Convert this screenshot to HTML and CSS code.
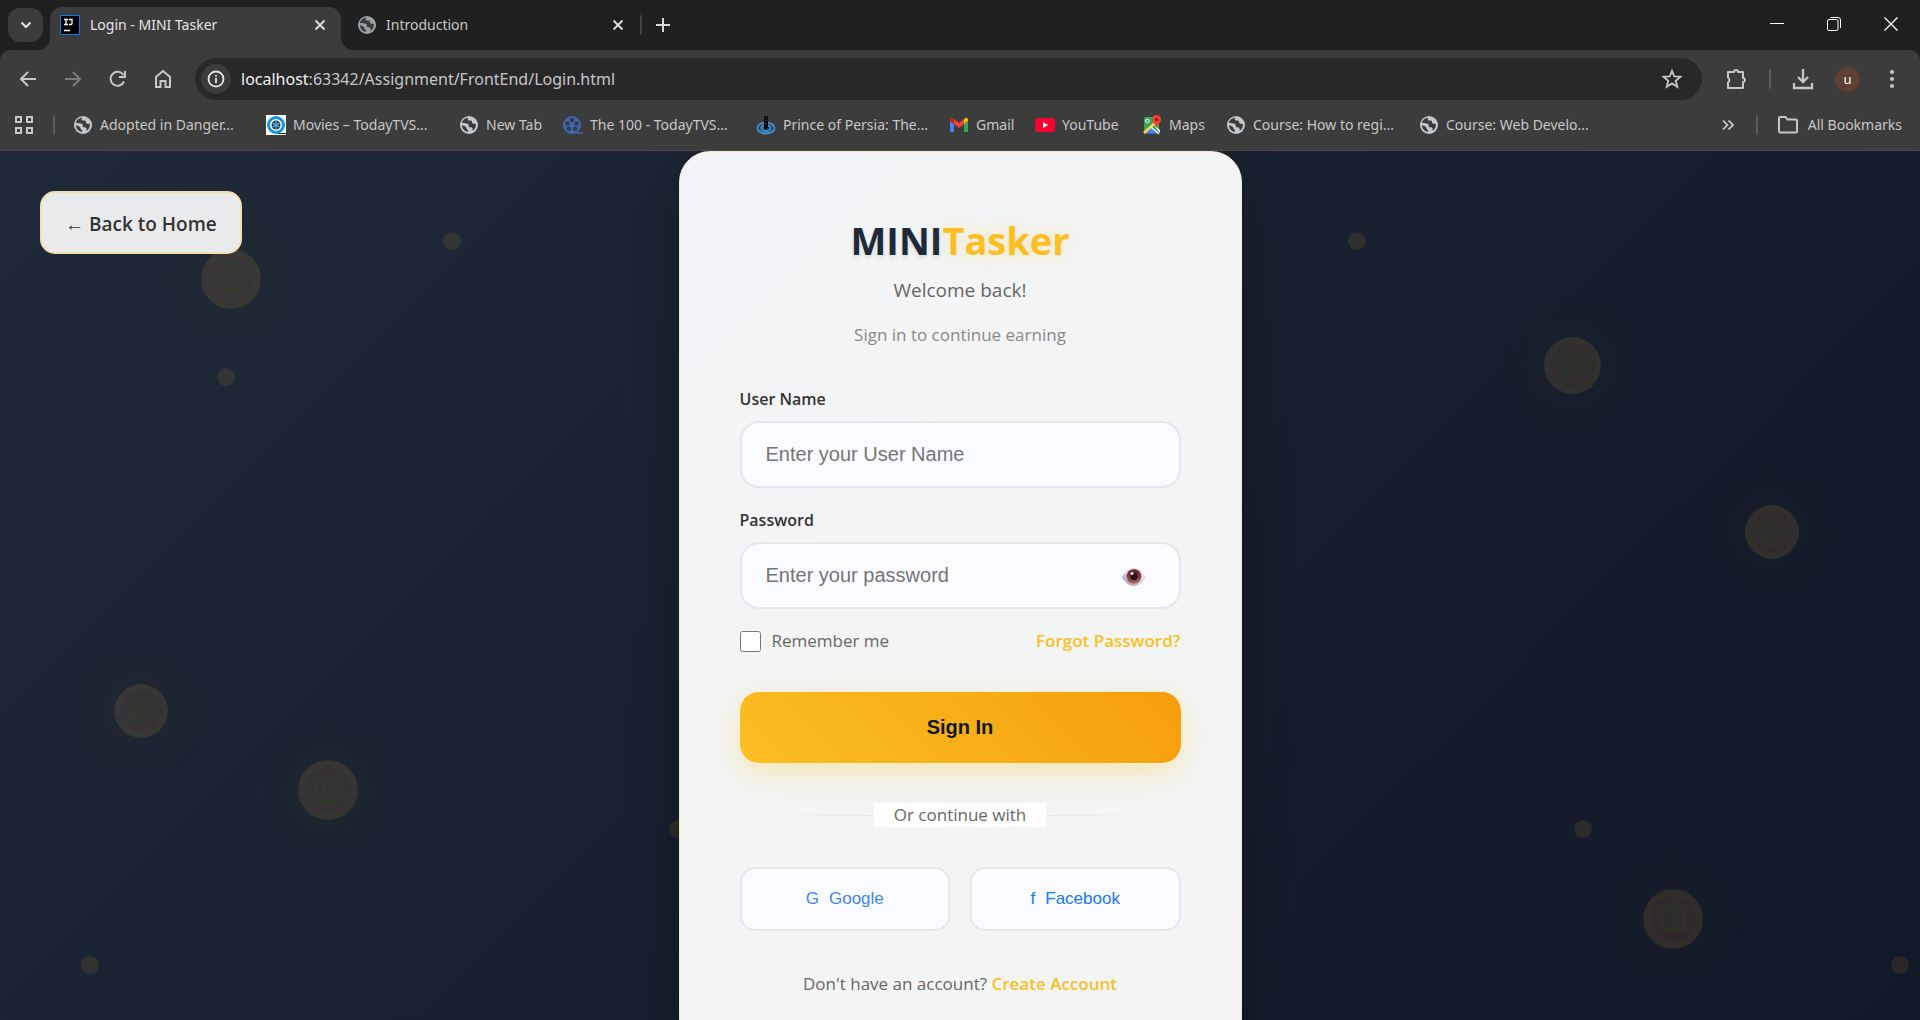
FILE: index.html
```html
<!DOCTYPE html>
<html lang="en">
<head>
<meta charset="utf-8">
<meta name="viewport" content="width=device-width, initial-scale=1">
<title>Login - MINI Tasker</title>
<link rel="stylesheet" href="styles.css">
</head>
<body>
<svg class="defs" aria-hidden="true">
  <symbol id="globe" viewBox="0 0 18 18">
    <circle cx="9" cy="9" r="9" fill="currentColor"/>
    <path class="sea" d="M8.500 1.800c-1 .8-1.300 1.700-.3 2.400 1.100.6 2.200-.2 3.200.6 1.100.9.2 2.500 1.700 2.900 1.100.3 2-.3 2.700.2.500 2.300-.8 5.400-3.100 6.900-.3-1.200.3-2.200-.6-3-.9-.7-2.200-.2-3-.9-.8-.9.100-2.200-.9-2.900-1.300-.8-4.500-.5-6.300-.9C2.300 4.300 5.100 1.800 8.500 1.800zM2 9.300c1.500.1 2.500.9 3.700 1.700 1 .7.700 1.800 1.600 2.500.6.500.9 1.200.8 2.400C4.600 15.600 2 12.700 2 9.300z"/>
  </symbol>
  <symbol id="cross" viewBox="0 0 12 12"><path d="M1.500 1.500l9 9m0-9l-9 9" fill="none" stroke="currentColor" stroke-width="1.800"/></symbol>
  <symbol id="coin" viewBox="0 0 60 60">
    <circle cx="30" cy="30" r="30" fill="#fbb934"/>
    <circle cx="30" cy="30" r="23" fill="#f5904a"/>
    <path fill="#d8c420" d="M30 11L45 20v3H15v-3zM18 24h4v16h-4zM25 24h4v16h-4zM32 24h4v16h-4zM39 24h4v16h-4zM17 39h27v4H17z"/>
  </symbol>
</svg>

<header class="browser">
  <div class="tab-strip">
    <button class="tab-search" aria-label="Search tabs"><svg width="12" height="8" viewBox="0 0 12 8"><path d="M1.500 1.500L6 6l4.500-4.500" fill="none" stroke="#e6e6e6" stroke-width="2"/></svg></button>
    <div class="tab tab-active">
      <svg width="20" height="20" viewBox="0 0 20 20"><path fill="#000" stroke="#0a7cf5" d="M.5.5h19v19H.5z"/><path d="M4 4.500h4m-2 0v5m-2 0h4M9 4.500h3v4q0 1-1.200 1H9M4 15.500h6" fill="none" stroke="#fff" stroke-width="1.300"/></svg>
      <span class="tab-title">Login - MINI Tasker</span>
      <button class="plain" aria-label="Close tab"><svg width="12" height="12"><use href="#cross"/></svg></button>
    </div>
    <div class="tab">
      <svg class="globe tab-globe" width="18" height="18"><use href="#globe"/></svg>
      <span class="tab-title">Introduction</span>
      <button class="plain" aria-label="Close tab"><svg width="12" height="12"><use href="#cross"/></svg></button>
    </div>
    <span class="separator"></span>
    <button class="plain new-tab" aria-label="New tab"><svg width="14" height="14" viewBox="0 0 14 14"><path d="M7 0v14M0 7h14" stroke="#d8d8d8" stroke-width="2"/></svg></button>
    <div class="window-controls">
      <button class="plain" aria-label="Minimize"><svg width="14" height="14" viewBox="0 0 14 14"><path d="M0 6.500h14" stroke="#fff"/></svg></button>
      <button class="plain" aria-label="Restore"><svg width="14" height="14" viewBox="0 0 14 14" fill="none" stroke="#fff"><rect x=".5" y="2.500" width="10.500" height="11" rx="1.500"/><path d="M3.500.5H11Q13.500.5 13.500 3v8"/></svg></button>
      <button class="plain" aria-label="Close"><svg width="14" height="14" viewBox="0 0 14 14"><path d="M.5.5l13 13m0-13l-13 13" stroke="#fff" stroke-width="1.300"/></svg></button>
    </div>
  </div>

  <div class="toolbar">
    <nav class="history" aria-label="Browser">
      <button class="plain" aria-label="Back"><svg width="20" height="20" viewBox="0 0 20 20"><path d="M18 10H3m7-7l-7 7 7 7" fill="none" stroke="#c7c7c7" stroke-width="2"/></svg></button>
      <button class="plain" aria-label="Forward"><svg width="20" height="20" viewBox="0 0 20 20"><path d="M2 10h15m-7-7l7 7-7 7" fill="none" stroke="#7c7c7c" stroke-width="2"/></svg></button>
      <button class="plain" aria-label="Reload"><svg width="20" height="20" viewBox="0 0 20 20"><path d="M16 12.500A7 7 0 1 1 15.500 6M17 2v6h-6" fill="none" stroke="#c7c7c7" stroke-width="2"/></svg></button>
      <button class="plain" aria-label="Home"><svg width="20" height="20" viewBox="0 0 20 20"><path d="M3 18V8l7-6 7 6v10h-4.500v-6h-5v6z" fill="none" stroke="#c7c7c7" stroke-width="2"/></svg></button>
    </nav>
    <div class="address">
      <button class="site-info" aria-label="Site information"><svg width="18" height="18" viewBox="0 0 18 18"><circle cx="9" cy="9" r="7.500" fill="none" stroke="#e3e3e3" stroke-width="1.800"/><path d="M9 8v5M9 5v1.800" stroke="#e3e3e3" stroke-width="1.800"/></svg></button>
      <span class="url"><b>localhost</b>:63342/Assignment/FrontEnd/Login.html</span>
      <button class="plain" aria-label="Bookmark this tab"><svg width="20" height="20" viewBox="0 0 20 20"><path d="M10 1.800l2.300 5.700 6.100.4-4.700 3.900 1.600 6L10 14.400l-5.300 3.400 1.600-6L1.600 7.900l6.100-.4z" fill="none" stroke="#c7c7c7" stroke-width="1.800"/></svg></button>
    </div>
    <div class="tools">
      <button class="plain" aria-label="Extensions"><svg width="22" height="22" viewBox="0 0 22 22"><path d="M2 4h6a2 2 0 0 1 4 0h5v6a2 2 0 0 1 0 4v6H2v-5.500a3 3 0 0 0 0-5z" fill="none" stroke="#c7c7c7" stroke-width="2" stroke-linejoin="round"/></svg></button>
      <span class="separator"></span>
      <button class="plain" aria-label="Downloads"><svg width="22" height="22" viewBox="0 0 22 22"><path d="M11 1v13m-5-5l5 5 5-5M2 15v5h18v-5" fill="none" stroke="#c7c7c7" stroke-width="2.300"/></svg></button>
      <button class="avatar" aria-label="Profile">u</button>
      <button class="plain" aria-label="Menu"><svg width="22" height="20" viewBox="0 0 22 20" fill="#c7c7c7"><circle cx="11" cy="3" r="2"/><circle cx="11" cy="10" r="2"/><circle cx="11" cy="17" r="2"/></svg></button>
    </div>
  </div>

  <div class="bookmarks">
    <button class="plain" aria-label="Apps"><svg width="18" height="18" viewBox="0 0 18 18" fill="none" stroke="#c7c7c7" stroke-width="2"><path d="M1 1h5v5H1zM12 1h5v5h-5zM1 12h5v5H1zM12 12h5v5h-5z"/></svg></button>
    <span class="separator"></span>
    <nav class="bookmark-list" aria-label="Bookmarks">
      <a href="#" class="wide"><svg class="globe"><use href="#globe"/></svg>Adopted in Danger...</a>
      <a href="#" class="wide"><svg viewBox="0 0 20 20"><path fill="#fff" d="M0 0h20v20H0z"/><circle cx="10" cy="10" r="7.500" fill="none" stroke="#1595e0" stroke-width="3"/><circle cx="10" cy="10" r="4.500" fill="#2b3a44"/><path d="M6.500 8l7 4M6.500 12l7-4M10 6v8" stroke="#4fb8ee" stroke-width="1.200"/><path d="M12 18.500h8" stroke="#222"/></svg>Movies – TodayTVS...</a>
      <a href="#" class="tab-link"><svg class="globe"><use href="#globe"/></svg>New Tab</a>
      <a href="#" class="wide"><svg viewBox="0 0 20 20"><circle cx="9" cy="10" r="9" fill="#3d67b0"/><g fill="#3c3c3c"><circle cx="9" cy="5" r="2.200"/><circle cx="4.500" cy="8.500" r="2.200"/><circle cx="13.500" cy="8.500" r="2.200"/><circle cx="6" cy="13.700" r="2.200"/><circle cx="12" cy="13.700" r="2.200"/></g><path d="M11 18h9" stroke="#3d67b0" stroke-width="1.500"/></svg>The 100 - TodayTVS...</a>
      <a href="#" class="wide"><svg viewBox="0 0 20 20"><g fill="none" stroke="#3c8fd6" stroke-width="2"><ellipse cx="10" cy="13" rx="8.500" ry="5.500"/><ellipse cx="10" cy="13" rx="4.500" ry="3"/></g><path fill="#0b0b0b" d="M8 1h4v11l-2 3-2-3z"/><path d="M10 2v9" stroke="#666" stroke-dasharray="1 2"/></svg>Prince of Persia: The...</a>
      <a href="#" class="gmail"><svg viewBox="0 0 20 20"><path fill="#4285f4" d="M1 6l4 3v8H2q-1 0-1-1z"/><path fill="#34a853" d="M15 9l4-3v10q0 1-1 1h-3z"/><path fill="#ea4335" d="M5 4l5 4 5-4v5l-5 4-5-4z"/><path fill="#c5221f" d="M1 5q0-3 3-1.800L5 4v5L1 6z"/><path fill="#fbbc04" d="M19 5q0-3-3-1.800L15 4v5l4-3z"/></svg>Gmail</a>
      <a href="#" class="youtube"><svg viewBox="0 0 20 20"><rect y="3" width="20" height="14" rx="3.500" fill="#ff0033"/><path fill="#fff" d="M8 7l5 3-5 3z"/></svg>YouTube</a>
      <a href="#" class="maps"><svg viewBox="0 0 20 20"><path fill="#34a853" d="M3 2h14v16H2V3z"/><path fill="#4285f4" d="M9.500 11l8 7.500h-15z"/><path fill="#fff" d="M11 9l7 6v3z"/><path d="M2 18L15 6" stroke="#fbd44b" stroke-width="2.500"/><path d="M9 12l8 7" stroke="#eee" stroke-width="1.500"/><circle cx="5.500" cy="6" r="1.800" fill="none" stroke="#fff"/><path fill="#ea4335" d="M14.500 0a4.500 4.500 0 0 1 4.500 4.500c0 3-3 4-4.500 8.500C13 8.500 10 7.500 10 4.500A4.500 4.500 0 0 1 14.500 0z"/><circle cx="14.500" cy="4.500" r="1.600" fill="#801b13"/></svg>Maps</a>
      <a href="#" class="wide"><svg class="globe"><use href="#globe"/></svg>Course: How to regi...</a>
      <a href="#" class="wide"><svg class="globe"><use href="#globe"/></svg>Course: Web Develo...</a>
    </nav>
    <button class="plain more" aria-label="More bookmarks"><svg width="12" height="12" viewBox="0 0 12 12"><path d="M1 1.500L5.500 6 1 10.500M6.500 1.500L11 6l-4.500 4.500" fill="none" stroke="#d0d0d0" stroke-width="1.700"/></svg></button>
    <span class="separator"></span>
    <a href="#" class="all-bookmarks"><svg width="20" height="18" viewBox="0 0 20 18"><path d="M2 1h5.500l2 2.500H18q1 0 1 1V15q0 1.500-1.500 1.500h-15Q1 16.500 1 15V2q0-1 1-1z" fill="none" stroke="#c7c7c7" stroke-width="2"/></svg>All Bookmarks</a>
  </div>
</header>

<main class="page">
  <div class="backdrop" aria-hidden="true">
    <svg class="coin coin-1"><use href="#coin"/></svg>
    <svg class="coin coin-2"><use href="#coin"/></svg>
    <svg class="coin coin-3"><use href="#coin"/></svg>
    <svg class="coin coin-4"><use href="#coin"/></svg>
    <svg class="coin coin-5"><use href="#coin"/></svg>
    <svg class="coin coin-6"><use href="#coin"/></svg>
    <i class="dot dot-1"></i><i class="dot dot-2"></i><i class="dot dot-3"></i><i class="dot dot-4"></i><i class="dot dot-5"></i><i class="dot dot-6"></i><i class="dot dot-7"></i>
  </div>
  <a href="#" class="back-link">← Back to Home</a>

  <section class="card">
    <h1 class="logo">MINI<span>Tasker</span></h1>
    <p class="welcome">Welcome back!</p>
    <p class="tagline">Sign in to continue earning</p>
    <form>
      <div class="field">
        <label for="username">User Name</label>
        <input id="username" type="text" placeholder="Enter your User Name">
      </div>
      <div class="field">
        <label for="password">Password</label>
        <div class="password-box">
          <input id="password" type="password" placeholder="Enter your password">
          <button type="button" class="reveal" aria-label="Show password">
            <svg width="24" height="20" viewBox="0 0 24 20">
              <defs>
                <linearGradient id="white" x1="0" y1="1" x2="1" y2="0"><stop offset="0" stop-color="#9a80be"/><stop offset=".45" stop-color="#d6d0de"/><stop offset="1" stop-color="#efecef"/></linearGradient>
                <linearGradient id="iris" x1="0" y1="0" x2="0" y2="1"><stop offset="0" stop-color="#5a1730"/><stop offset="1" stop-color="#b0674e"/></linearGradient>
              </defs>
              <path d="M0 10Q5 1 12 1t12 9q-5 9-12 9T0 10z" fill="url(#white)"/>
              <circle cx="12" cy="9.500" r="7.300" fill="url(#iris)"/><circle cx="12" cy="9.500" r="3.700" fill="#25151d"/><circle cx="10" cy="6.500" r="1.500" fill="#fff"/>
            </svg>
          </button>
        </div>
      </div>
      <div class="options">
        <label class="remember"><input type="checkbox">Remember me</label>
        <a href="#">Forgot Password?</a>
      </div>
      <button class="submit" type="submit">Sign In</button>
    </form>
    <div class="divider"><span>Or continue with</span></div>
    <div class="social">
      <button class="google"><span>G</span>Google</button>
      <button class="facebook"><span>f</span>Facebook</button>
    </div>
    <p class="signup">Don't have an account? <a href="#">Create Account</a></p>
  </section>
</main>
</body>
</html>
```
FILE: styles.css
```css
* { box-sizing: border-box; }

body {
  margin: 0;
  height: 100vh;
  overflow: hidden;
  display: flex;
  flex-direction: column;
  background: #111827;
  font-family: "Open Sans", "Noto Sans", sans-serif;
}

a { color: inherit; text-decoration: none; }
button { font: inherit; cursor: pointer; }
.defs { position: absolute; width: 0; height: 0; }

.plain {
  display: flex;
  align-items: center;
  justify-content: center;
  padding: 0;
  border: 0;
  background: none;
  color: #e0e0e0;
}

/* Browser frame */
.browser {
  flex: none;
  background: #1f2120;
  border-bottom: 1px solid #4a4a4a;
  color: #c7c7c7;
  font-family: "Noto Sans", "Open Sans", sans-serif;
  font-size: 14px;
  line-height: 20px;
}
.separator { width: 2px; height: 20px; background: #5a5a5a; border-radius: 1px; flex: none; }
.globe { color: #c3c7ce; }
.sea { fill: #3c3c3c; }
.tab-globe { color: #9aa0a8; }

.tab-strip { display: flex; height: 50px; padding-left: 8px; }
.tab-search {
  width: 35px;
  height: 34px;
  margin-top: 8px;
  padding: 0;
  display: grid;
  place-items: center;
  border: 0;
  border-radius: 12px;
  background: #3c3c3c;
}
.tab {
  display: flex;
  align-items: center;
  gap: 10px;
  width: 301px;
  height: 36px;
  margin-top: 7px;
  padding: 0 18px 0 17px;
}
.tab-title { flex: 1; }
.tab-active {
  position: relative;
  width: 291px;
  height: 43px;
  margin-left: 7px;
  padding: 0 15px 7px 10px;
  border-radius: 12px 12px 0 0;
  background: #3c3c3c;
  color: #e6e6e6;
}
.tab-active::before, .tab-active::after {
  content: "";
  position: absolute;
  bottom: 0;
  width: 12px;
  height: 12px;
}
.tab-active::before { right: 100%; background: radial-gradient(circle at 0 0, transparent 12px, #3c3c3c 12px); }
.tab-active::after { left: 100%; background: radial-gradient(circle at 100% 0, transparent 12px, #3c3c3c 12px); }
.tab-strip > .separator { margin-top: 15px; margin-left: -2px; background: #444; }
.new-tab { width: 42px; height: 36px; margin-top: 7px; }
.window-controls { display: flex; margin-left: auto; padding-right: 1px; height: 48px; }
.window-controls button { width: 57px; }

.toolbar {
  display: flex;
  align-items: center;
  height: 58px;
  padding-right: 13px;
  border-radius: 10px 10px 0 0;
  background: #3c3c3c;
}
.history { display: flex; width: 195px; padding-left: 5px; }
.history button { width: 45px; }
.address {
  flex: 1;
  display: flex;
  align-items: center;
  gap: 10px;
  height: 42px;
  padding: 0 20px 0 6px;
  border-radius: 21px;
  background: #282828;
}
.site-info {
  width: 30px;
  height: 30px;
  padding: 0;
  display: grid;
  place-items: center;
  border: 0;
  border-radius: 50%;
  background: #3c3c3c;
}
.url { flex: 1; font-size: 16px; }
.url b { font-weight: 400; color: #f0f0f0; }
.tools { display: flex; align-items: center; width: 205px; padding-left: 24px; gap: 21px; }
.avatar {
  width: 25px;
  height: 25px;
  padding: 0;
  border: 0;
  border-radius: 50%;
  background: #5f4035;
  color: #fff;
  font-size: 13px;
  line-height: 20px;
}

.bookmarks {
  display: flex;
  align-items: center;
  height: 42px;
  padding: 0 18px 8px 15px;
  background: #3c3c3c;
}
.bookmarks > .separator:first-of-type { margin: 0 18px 0 20px; }
.bookmark-list { flex: 1; display: flex; white-space: nowrap; }
.bookmark-list a { display: flex; align-items: center; gap: 7px; }
.bookmark-list svg { width: 20px; height: 20px; flex: none; }
.bookmark-list .globe { padding: 1px; }
.bookmark-list .wide { width: 193px; }
.bookmark-list .tab-link { width: 104px; }
.bookmark-list .gmail { width: 86px; }
.bookmark-list .youtube { width: 107px; }
.bookmark-list .maps { width: 84px; }
.more { margin-right: 22px; }
.all-bookmarks { display: flex; align-items: center; gap: 10px; margin-left: 20px; }

/* Login page */
.page {
  position: relative;
  flex: 1;
  min-height: 0;
  overflow: hidden;
  display: flex;
  justify-content: center;
  align-items: flex-start;
  background: linear-gradient(135deg, #1f2937, #111827);
}
.backdrop { position: absolute; inset: 0; }
.coin { position: absolute; width: 60px; height: 60px; opacity: 0.12; border-radius: 50%; box-shadow: 0 0 40px rgba(251, 191, 36, 0.3); }
.coin-1 { left: 201px; top: 98px; transform: rotate(25deg); }
.coin-2 { left: 114px; top: 533px; width: 54px; height: 54px; transform: rotate(235deg); }
.coin-3 { left: 298px; top: 609px; transform: rotate(172deg); }
.coin-4 { right: 319px; top: 186px; width: 57px; height: 57px; transform: rotate(90deg); }
.coin-5 { right: 121px; top: 354px; width: 54px; height: 54px; transform: rotate(215deg); }
.coin-6 { right: 217px; top: 738px; }
.dot { position: absolute; width: 18px; height: 18px; border-radius: 50%; background: #fbbf24; opacity: 0.1; }
.dot-1 { left: 443px; top: 81px; }
.dot-2 { left: 217px; top: 217px; }
.dot-3 { right: 554px; top: 81px; }
.dot-4 { right: 328px; top: 669px; }
.dot-5 { left: 81px; top: 805px; }
.dot-6 { right: 11px; top: 805px; }
.dot-7 { left: 669px; top: 669px; }

.back-link {
  position: absolute;
  left: 40px;
  top: 40px;
  padding: 18px 23px 15px;
  border: 2px solid #f3dfae;
  border-radius: 15px;
  background: #e9eaec;
  color: #333;
  font-size: 19px;
  font-weight: 600;
  line-height: 26px;
}

.card {
  position: relative;
  width: 563px;
  padding: 60px;
  border: 1px solid #f6e7c0;
  border-radius: 31px;
  background: linear-gradient(135deg, #f3f4f8, #f3f5f4 50%, #f3f5f4 85%, #f4f3f3);
  box-shadow: 0 25px 50px rgba(0, 0, 0, 0.3);
  text-align: center;
  color: #666;
  font-size: 17px;
  line-height: 24px;
}
.card p { margin: 0; }
.card a { color: #fbbf24; font-weight: 600; }
.card .logo {
  margin: 0;
  color: #1f2937;
  font-size: 38px;
  line-height: 56px;
  font-weight: 700;
  text-shadow: 0 3px 5px rgba(0, 0, 0, 0.1);
}
.logo span { color: #fbbf24; text-shadow: 0 0 20px rgba(251, 191, 36, 0.3); }
.card .welcome { margin: 10px 0 21px; font-size: 19px; }
.card .tagline { margin-bottom: 40px; color: #888; }

.field { margin-bottom: 20px; text-align: left; }
.field label { display: block; margin-bottom: 10px; color: #333; font-size: 16px; font-weight: 600; }
.field input {
  display: block;
  width: 100%;
  height: 67px;
  padding: 0 24px;
  border: 2px solid #e5e7eb;
  border-radius: 19px;
  background: #fafbff;
  color: #333;
  font: 20px "Liberation Sans", Arial, sans-serif;
}
.field input::placeholder { color: #757575; opacity: 1; }
.password-box { position: relative; }
.reveal { position: absolute; right: 35px; top: 25px; display: flex; padding: 0; border: 0; background: none; }

.options { display: flex; justify-content: space-between; align-items: center; }
.remember { display: flex; align-items: center; gap: 11px; }
.remember input { width: 21px; height: 21px; margin: 0; }
.submit {
  width: 100%;
  height: 71px;
  margin-top: 39px;
  border: 0;
  border-radius: 19px;
  background: linear-gradient(45deg, #fbbf24, #f59e0b);
  box-shadow: 0 10px 30px rgba(251, 191, 36, 0.3);
  color: #111827;
  font: bold 20px "Liberation Sans", Arial, sans-serif;
}
.divider { margin: 40px 0; display: flex; align-items: center; }
.divider::before, .divider::after { content: ""; flex: 1; height: 1px; background: linear-gradient(90deg, transparent, #e5e7eb); }
.divider::after { background: linear-gradient(90deg, #e5e7eb, transparent); }
.divider span { padding: 0 20px; background: #fff; }
.social { display: grid; grid-template-columns: 1fr 1fr; gap: 20px; }
.social button {
  display: flex;
  justify-content: center;
  align-items: center;
  gap: 10px;
  height: 64px;
  border: 2px solid #e5e7eb;
  border-radius: 15px;
  background: #fafbff;
  font: 17px "Liberation Sans", Arial, sans-serif;
}
.social .google { color: #4285f4; }
.social .facebook { color: #1877f2; }
.card .signup { margin-top: 41px; }
```
